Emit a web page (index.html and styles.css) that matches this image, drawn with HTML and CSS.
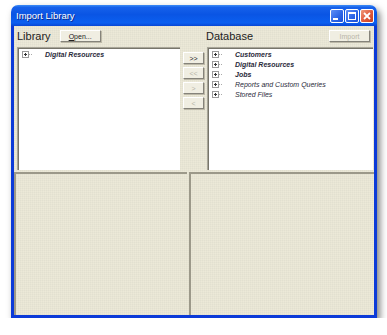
FILE: index.html
```
<!DOCTYPE html>
<html lang="en">
<head>
  <meta charset="UTF-8" />
  <title>Import Library</title>
  <link rel="stylesheet" href="styles.css">
</head>
<body>

  <!-- Dialog window -->
  <div class="window">
    <div class="titlebar">
      <span class="title">Import Library</span>
      <div class="controls">
        <span class="ctl">
          <svg width="14" height="14" viewBox="0 0 14 14"><rect x="3" y="9" width="5" height="2" fill="#fff"/></svg>
        </span>
        <span class="ctl">
          <svg width="14" height="14" viewBox="0 0 14 14"><rect x="3.5" y="3.5" width="7" height="7" fill="none" stroke="#fff" stroke-width="1"/><rect x="3" y="3" width="8" height="2" fill="#fff"/></svg>
        </span>
        <span class="ctl close">
          <svg width="14" height="14" viewBox="0 0 14 14"><path d="M4 4 L10 10 M10 4 L4 10" stroke="#fff" stroke-width="1.8"/></svg>
        </span>
      </div>
    </div>

    <div class="frame">
      <div class="top">
        <!-- Library side -->
        <div class="side library">
          <div class="head">
            <span class="label">Library</span>
            <button class="btn open"><u>O</u>pen...</button>
          </div>
          <div class="list">
            <div class="item strong">
              <svg class="plus" width="16" height="7" viewBox="0 0 16 7"><rect x="0.5" y="0.5" width="6" height="6" fill="#fff" stroke="#9a9a9a"/><path d="M2 3.5 H5 M3.5 2 V5" stroke="#333" stroke-width="1"/><path d="M7 3.5 H11" stroke="#aaa" stroke-width="1" stroke-dasharray="1 1"/></svg>
              <span class="name">Digital Resources</span>
            </div>
          </div>
        </div>

        <!-- Move buttons -->
        <div class="movers">
          <button class="btn mv">&gt;&gt;</button>
          <button class="btn mv" disabled>&lt;&lt;</button>
          <button class="btn mv" disabled>&gt;</button>
          <button class="btn mv" disabled>&lt;</button>
        </div>

        <!-- Database side -->
        <div class="side database">
          <div class="head">
            <span class="label">Database</span>
            <button class="btn import" disabled>Import</button>
          </div>
          <div class="list">
            <div class="item strong">
              <svg class="plus" width="16" height="7" viewBox="0 0 16 7"><rect x="0.5" y="0.5" width="6" height="6" fill="#fff" stroke="#9a9a9a"/><path d="M2 3.5 H5 M3.5 2 V5" stroke="#333" stroke-width="1"/><path d="M7 3.5 H11" stroke="#aaa" stroke-width="1" stroke-dasharray="1 1"/></svg>
              <span class="name">Customers</span>
            </div>
            <div class="item strong">
              <svg class="plus" width="16" height="7" viewBox="0 0 16 7"><rect x="0.5" y="0.5" width="6" height="6" fill="#fff" stroke="#9a9a9a"/><path d="M2 3.5 H5 M3.5 2 V5" stroke="#333" stroke-width="1"/><path d="M7 3.5 H11" stroke="#aaa" stroke-width="1" stroke-dasharray="1 1"/></svg>
              <span class="name">Digital Resources</span>
            </div>
            <div class="item strong">
              <svg class="plus" width="16" height="7" viewBox="0 0 16 7"><rect x="0.5" y="0.5" width="6" height="6" fill="#fff" stroke="#9a9a9a"/><path d="M2 3.5 H5 M3.5 2 V5" stroke="#333" stroke-width="1"/><path d="M7 3.5 H11" stroke="#aaa" stroke-width="1" stroke-dasharray="1 1"/></svg>
              <span class="name">Jobs</span>
            </div>
            <div class="item">
              <svg class="plus" width="16" height="7" viewBox="0 0 16 7"><rect x="0.5" y="0.5" width="6" height="6" fill="#fff" stroke="#9a9a9a"/><path d="M2 3.5 H5 M3.5 2 V5" stroke="#333" stroke-width="1"/><path d="M7 3.5 H11" stroke="#aaa" stroke-width="1" stroke-dasharray="1 1"/></svg>
              <span class="name">Reports and Custom Queries</span>
            </div>
            <div class="item">
              <svg class="plus" width="16" height="7" viewBox="0 0 16 7"><rect x="0.5" y="0.5" width="6" height="6" fill="#fff" stroke="#9a9a9a"/><path d="M2 3.5 H5 M3.5 2 V5" stroke="#333" stroke-width="1"/><path d="M7 3.5 H11" stroke="#aaa" stroke-width="1" stroke-dasharray="1 1"/></svg>
              <span class="name">Stored Files</span>
            </div>
          </div>
        </div>
      </div>

      <!-- Preview panes -->
      <div class="bottom">
        <div class="pane left"></div>
        <div class="pane right"></div>
      </div>
    </div>
  </div>

</body>
</html>
```

FILE: styles.css
```
* {
  margin: 0;
  padding: 0;
  box-sizing: border-box;
}

body {
  background-color: #fff;
  font-family: 'Liberation Sans', Arial, sans-serif;
}

.window {
  width: 366px;
  margin: 5px 0 0 11px;
  border-radius: 7px 7px 0 0;
  box-shadow: 3px 4px 7px rgba(0, 0, 0, 0.5);
}

.titlebar {
  height: 21px;
  display: flex;
  align-items: center;
  justify-content: space-between;
  padding: 0 3px 0 5px;
  border-radius: 7px 7px 0 0;
  background: linear-gradient(to bottom, #3c8cf5 0%, #1660ea 12%, #0a55e4 45%, #0b5ff0 85%, #0846d4 100%);
}

.title {
  color: #fff;
  font-size: 9.5px;
  text-shadow: 1px 1px 0 #0a2a8a;
}

.controls {
  display: flex;
  gap: 1px;
}

.ctl {
  width: 14px;
  height: 14px;
  border: 1px solid #fff;
  border-radius: 2px;
  background: linear-gradient(135deg, #5f8ff5 0%, #2a64e6 60%, #1d50d6 100%);
  display: flex;
}

.ctl svg {
  margin: -1px;
}

.ctl.close {
  background: linear-gradient(135deg, #f09a7c 0%, #e0583a 55%, #c8401f 100%);
}

.frame {
  height: 292px;
  border: 3px solid #0b3ad8;
  border-top: none;
  background-color: #ece9d8;
  background-image:
    repeating-linear-gradient(to right, rgba(0, 0, 0, 0.018) 0 1px, transparent 1px 2px),
    repeating-linear-gradient(to bottom, rgba(0, 0, 0, 0.018) 0 1px, transparent 1px 2px);
  display: flex;
  flex-direction: column;
}

.top {
  display: flex;
  height: 144px;
  padding-left: 3px;
}

.side {
  display: flex;
  flex-direction: column;
}

.library {
  width: 163px;
}

.database {
  width: 166px;
}

.head {
  height: 21px;
  display: flex;
  align-items: center;
  justify-content: space-between;
  padding-bottom: 1px;
}

.library .head {
  justify-content: flex-start;
}

.label {
  font-size: 11px;
  color: #222;
}

.database .label {
  margin-left: -1px;
}

.btn {
  font-family: 'Liberation Sans', Arial, sans-serif;
  font-size: 7px;
  color: #222;
  background-color: #f0eee2;
  border: 1px solid;
  border-color: #fff #85837a #85837a #fff;
  box-shadow: 1px 1px 0 #bdb9a8;
}

.btn:disabled {
  color: #b8b5a8;
}

.open {
  width: 41px;
  height: 12px;
  margin-left: 9px;
}

.import {
  width: 41px;
  height: 12px;
  margin-right: 3px;
}

.list {
  height: 123px;
  background-color: #fff;
  border-top: 1px solid #a8a598;
  border-left: 1px solid #a8a598;
  box-shadow: inset 1px 1px 0 #77756a;
  padding-top: 1px;
}

.item {
  height: 10px;
  display: flex;
  align-items: center;
  font-size: 7px;
  font-style: italic;
  color: #2a2a3a;
}

.item.strong {
  font-weight: bold;
}

.plus {
  margin-left: 4px;
  flex-shrink: 0;
}

.name {
  margin-left: 7px;
}

.movers {
  width: 27px;
  display: flex;
  flex-direction: column;
  align-items: center;
  gap: 3px;
  padding-top: 26px;
}

.mv {
  width: 21px;
  height: 12px;
  font-size: 7px;
}

.bottom {
  display: flex;
  gap: 2px;
  height: 145px;
  padding-top: 2px;
}

.pane {
  border-top: 2px solid #9c998a;
  border-left: 2px solid #9c998a;
}

.pane.left {
  width: 173px;
}

.pane.right {
  flex: 1;
}
```
